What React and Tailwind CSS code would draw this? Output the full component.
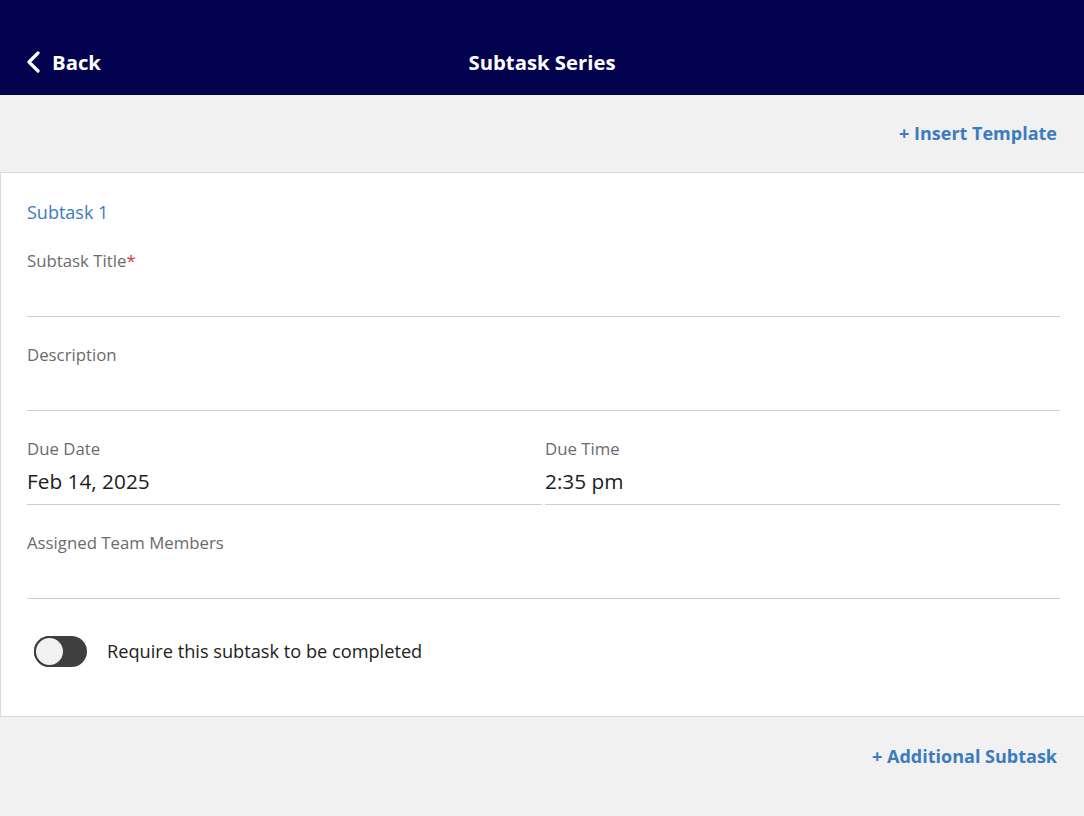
import { useState } from "react";

function Field({ label, required, value }) {
  return (
    <div className="pt-[28px]">
      <label className="block h-5 text-[16.8px] leading-5 text-[#6b6b6b]">
        {label}
        {required && <span className="text-[#e0312d]">*</span>}
      </label>
      {value ? (
        <div className="mt-2 h-[37px] text-[20.8px] leading-7 text-[#1c1c1c]">{value}</div>
      ) : (
        <div className="h-[45px]" />
      )}
      <div className="h-px bg-[#cfcfcf]" />
    </div>
  );
}

export default function App() {
  const [required, setRequired] = useState(false);

  return (
    <div className="flex min-h-screen flex-col bg-[#f1f1f1] font-['Open_Sans',sans-serif]">
      {/* --- Header --- */}
      <header className="relative flex h-[95px] items-end bg-[#02024f] pb-[19px] text-white">
        <button className="flex items-center gap-[11px] pl-[25px] text-[20.3px] font-bold leading-7">
          <svg width="16" height="22" viewBox="0 0 16 22" fill="none">
            <polyline points="13,2 4,11 13,20" stroke="white" strokeWidth="3.2" strokeLinecap="round" strokeLinejoin="round" />
          </svg>
          Back
        </button>
        <h1 className="absolute inset-x-0 bottom-[19px] text-center text-[20.3px] font-bold leading-7">Subtask Series</h1>
      </header>

      {/* --- Template bar --- */}
      <div className="flex h-[78px] items-center justify-end border-b border-[#dadada] pr-[27px]">
        <button className="text-[18px] font-bold text-[#3b7bbf]">+ Insert Template</button>
      </div>

      {/* --- Subtask card --- */}
      <section className="border-b border-l border-[#dadada] bg-white pb-[49px] pl-[26px] pr-[24px] pt-[28px]">
        <h2 className="text-[18px] leading-[22px] text-[#3b7bbf]">Subtask 1</h2>
        <div>
          <Field label="Subtask Title" required />
          <Field label="Description" />
          <div className="grid grid-cols-2 gap-[3px]">
            <Field label="Due Date" value="Feb 14, 2025" />
            <Field label="Due Time" value="2:35 pm" />
          </div>
          <Field label="Assigned Team Members" />
        </div>

        <div className="mt-[37px] flex items-center gap-[20px] pl-[7px]">
          <button
            onClick={() => setRequired(!required)}
            className="relative h-[31px] w-[53px] rounded-full bg-[#3f3f3f]"
          >
            <span className="absolute left-0 top-0 h-[31px] w-[31px] rounded-full border-2 border-[#3f3f3f] bg-[#f2f2f2]" />
          </button>
          <span className="text-[18.2px] text-[#222]">Require this subtask to be completed</span>
        </div>
      </section>

      {/* --- Footer action --- */}
      <div className="flex justify-end pr-[27px] pt-[26px]">
        <button className="text-[18px] font-bold text-[#3b7bbf]">+ Additional Subtask</button>
      </div>
    </div>
  );
}
